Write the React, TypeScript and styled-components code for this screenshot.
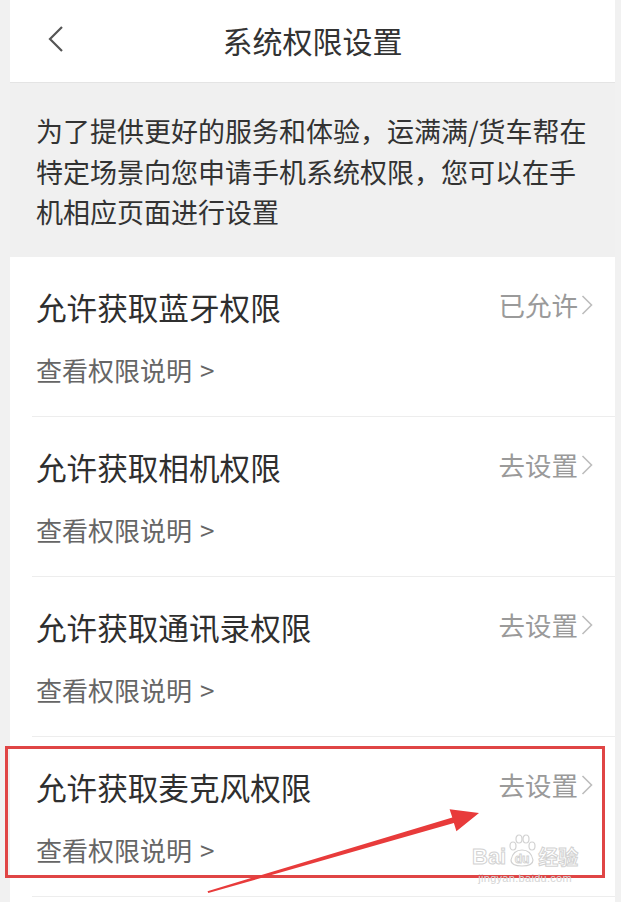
import React from "react";
import styled, { createGlobalStyle } from "styled-components";

const GlobalStyle = createGlobalStyle`
  html, body {
    margin: 0;
    padding: 0;
    background: #f1f1f1;
  }
  body {
    font-family: "Noto Sans CJK SC", "Noto Sans", "Liberation Sans", sans-serif;
  }
  * { box-sizing: border-box; }
`;

const Page = styled.div`
  position: relative;
  width: 621px;
  height: 902px;
  overflow: hidden;
  background: #f1f1f1;
  padding: 0 6px 0 10px;
`;

const Screen = styled.div`
  display: flex;
  flex-direction: column;
  background: #ffffff;
  height: 100%;
  & > * {
    flex-shrink: 0;
  }
`;

const Header = styled.header`
  display: grid;
  grid-template-columns: 1fr auto 1fr;
  align-items: center;
  height: 83px;
  padding-bottom: 1px;
  border-bottom: 1px solid #e4e4e4;
  background: #ffffff;
`;

const BackButton = styled.div`
  display: flex;
  align-items: center;
  padding-left: 37px;
  padding-bottom: 3px;
`;

const HeaderTitle = styled.h1`
  margin: 0;
  font-size: 30px;
  font-weight: 400;
  color: #333333;
  line-height: 40px;
  letter-spacing: 0;
  padding-bottom: 2px;
`;

const Intro = styled.div`
  background: #f0f0f0;
  padding: 28px 26px 24px 26px;
  font-size: 27px;
  line-height: 40.5px;
  color: #333333;
`;

const List = styled.div`
  display: flex;
  flex-direction: column;
  background: #ffffff;
`;

const Row = styled.div`
  margin-left: 22px;
  padding: 30px 22px 28px 4px;
  border-bottom: 1px solid #ededed;
  display: flex;
  flex-direction: column;
`;

const TitleLine = styled.div`
  display: flex;
  align-items: center;
  justify-content: space-between;
  height: 40px;
`;

const Title = styled.div`
  font-size: 30.6px;
  line-height: 40px;
  color: #2f2f2f;
`;

const Status = styled.div`
  display: flex;
  align-items: center;
  gap: 3px;
  font-size: 26.5px;
  line-height: 36px;
  color: #9a9a9a;
  padding-bottom: 4px;
`;

const Sub = styled.div`
  margin-top: 25px;
  font-size: 26px;
  line-height: 36px;
  color: #666666;
`;

const SubArrow = styled.span`
  margin-left: 8px;
`;

const RedBox = styled.div`
  position: absolute;
  left: 5px;
  top: 746px;
  width: 600px;
  height: 132px;
  border: 3px solid #e04545;
  pointer-events: none;
`;

const Overlay = styled.svg`
  position: absolute;
  left: 0;
  top: 0;
  pointer-events: none;
`;

const Watermark = styled.div`
  position: absolute;
  left: 472px;
  top: 834px;
  display: flex;
  flex-direction: column;
  align-items: center;
  pointer-events: none;
`;

const MarkTop = styled.div`
  display: flex;
  align-items: flex-end;
  gap: 1px;
`;

const OutlineText = styled.span<{ size: number }>`
  font-family: "Liberation Sans", "Noto Sans CJK SC", sans-serif;
  font-size: ${(p) => p.size}px;
  font-weight: 700;
  line-height: 1;
  color: rgba(255, 255, 255, 0.6);
  -webkit-text-stroke: 1px #d2d2d2;
`;

const MarkUrl = styled.span`
  font-family: "Liberation Sans", sans-serif;
  font-size: 11px;
  line-height: 12px;
  color: #d4d4d4;
  margin-top: 4px;
  letter-spacing: 0.3px;
`;

const Chevron = ({ color = "#bdbdbd" }: { color?: string }) => (
  <svg width="12" height="22" viewBox="0 0 12 22">
    <path d="M1.5 2 L10.5 11 L1.5 20" fill="none" stroke={color} strokeWidth="1.6" />
  </svg>
);

const BackIcon = () => (
  <svg width="18" height="28" viewBox="0 0 18 28">
    <path d="M15 2 L3 14 L15 26" fill="none" stroke="#555" strokeWidth="2.2" />
  </svg>
);

const Paw = () => (
  <svg width="30" height="34" viewBox="0 0 30 34">
    <g fill="none" stroke="#d2d2d2" strokeWidth="1.2">
      <ellipse cx="6" cy="12" rx="3" ry="4" />
      <ellipse cx="12" cy="5" rx="3" ry="4" />
      <ellipse cx="19" cy="5" rx="3" ry="4" />
      <ellipse cx="25" cy="12" rx="3" ry="4" />
      <path d="M4 26 Q6 16 15 16 Q24 16 26 26 Q26 32 15 32 Q4 32 4 26 Z" />
    </g>
    <text x="15" y="29" textAnchor="middle" fontSize="12" fontWeight="700" fontFamily="Liberation Sans, sans-serif" fill="none" stroke="#d2d2d2" strokeWidth="0.9">du</text>
  </svg>
);

const items = [
  { title: "允许获取蓝牙权限", status: "已允许" },
  { title: "允许获取相机权限", status: "去设置" },
  { title: "允许获取通讯录权限", status: "去设置" },
  { title: "允许获取麦克风权限", status: "去设置" },
];

export default function App() {
  return (
    <>
      <GlobalStyle />
      <Page>
        <Screen>
          <Header>
            <BackButton>
              <BackIcon />
            </BackButton>
            <HeaderTitle>系统权限设置</HeaderTitle>
            <div />
          </Header>
          <Intro>
            为了提供更好的服务和体验，运满满/货车帮在特定场景向您申请手机系统权限，您可以在手机相应页面进行设置
          </Intro>
          <List>
            {items.map((it) => (
              <Row key={it.title}>
                <TitleLine>
                  <Title>{it.title}</Title>
                  <Status>
                    {it.status}
                    <Chevron />
                  </Status>
                </TitleLine>
                <Sub>
                  查看权限说明<SubArrow>&gt;</SubArrow>
                </Sub>
              </Row>
            ))}
          </List>
        </Screen>
        <RedBox />
        <Watermark>
          <MarkTop>
            <OutlineText size={22}>Bai</OutlineText>
            <Paw />
            <OutlineText size={20}>经验</OutlineText>
          </MarkTop>
          <MarkUrl>jingyan.baidu.com</MarkUrl>
        </Watermark>
        <Overlay width="621" height="902" viewBox="0 0 621 902">
          <polygon
            points="207.5,891.2 452.3,817.6 449.6,809.2 479,813 456.4,831.2 453.9,823 208.3,893"
            fill="#e83b3b"
          />
        </Overlay>
      </Page>
    </>
  );
}
